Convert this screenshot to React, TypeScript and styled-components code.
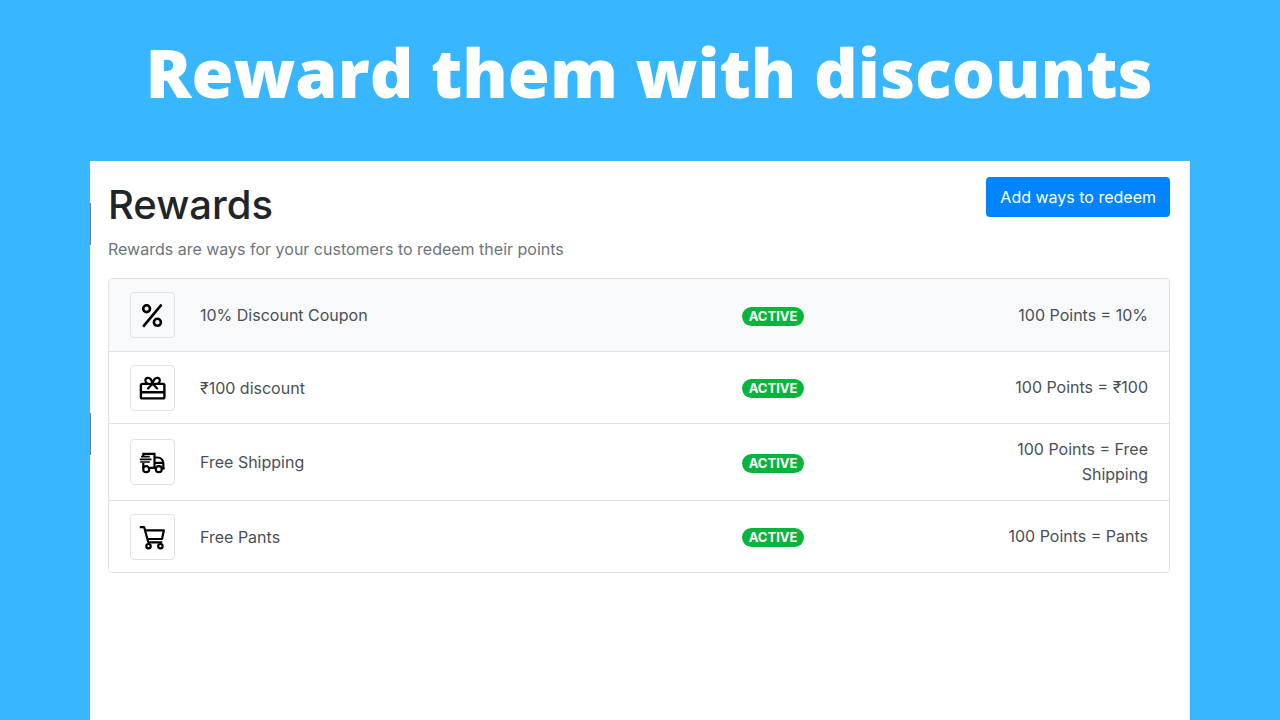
import React from "react";
import styled, { createGlobalStyle } from "styled-components";

const GlobalStyle = createGlobalStyle`
  * { box-sizing: border-box; }
  body {
    margin: 0;
    background: #38b6ff;
    font-family: Inter, "Liberation Sans", sans-serif;
    font-size: 16px;
    color: #495057;
  }
`;

const Page = styled.div`
  display: flex;
  flex-direction: column;
  min-height: 100vh;
`;

const Banner = styled.h1`
  margin: 0;
  padding: 24px 20px 41px 38px;
  text-align: center;
  color: #fff;
  font: 800 68px/96px "Open Sans", sans-serif;
`;

const Panel = styled.main`
  position: relative;
  flex: 1;
  margin: 0 90px;
  padding: 16px 19px 20px 18px;
  background: #fff;
  border-right: 1px solid #e9ecef;
`;

const EdgeMark = styled.span<{ $top: number }>`
  position: absolute;
  left: 0;
  top: ${(p) => p.$top}px;
  width: 1px;
  height: 42px;
  background: #66808f;
`;

const Header = styled.header`
  display: flex;
  justify-content: space-between;
  align-items: flex-start;
`;

const Title = styled.h2`
  margin: 0;
  font-size: 40px;
  line-height: 55px;
  font-weight: 500;
  color: #212529;
`;

const Subtitle = styled.p`
  margin: 4px 0 16px;
  line-height: 26px;
  color: #6c757d;
`;

const AddButton = styled.button`
  height: 40px;
  padding: 0 14px;
  border: 0;
  border-radius: 4px;
  background: #0084ff;
  color: #fff;
  font: inherit;
`;

const List = styled.ul`
  margin: 0;
  padding: 0;
  list-style: none;
  border: 1px solid #dfe2e5;
  border-radius: 4px;
  overflow: hidden;
`;

const Row = styled.li<{ $highlighted: boolean }>`
  display: grid;
  grid-template-columns: 70px 20fr 9fr 6fr;
  align-items: center;
  min-height: 72px;
  padding: 12px 21px;
  background: ${(p) => (p.$highlighted ? "#f8f9fb" : "#fff")};
  & + & { border-top: 1px solid #dfe2e5; }
`;

const IconBox = styled.span`
  display: flex;
  align-items: center;
  justify-content: center;
  width: 45px;
  height: 46px;
  border: 1px solid #dee2e6;
  border-radius: 4px;
  color: #000;
`;

const Badge = styled.span`
  justify-self: start;
  padding: 0 7px;
  margin-top: 2px;
  border-radius: 10px;
  background: #06b53c;
  color: #fff;
  font-size: 13px;
  line-height: 19px;
  font-weight: 700;
`;

const Points = styled.span`
  padding: 1px 0;
  text-align: right;
  line-height: 25px;
`;

const Glyph = styled.svg`
  width: 28px;
  height: 28px;
  fill: none;
  stroke: currentColor;
  stroke-width: 2.2;
`;

const PercentIcon = () => (
  <Glyph viewBox="0 0 28 28" aria-hidden="true">
    <g strokeWidth="2.600">
      <circle cx="7.600" cy="7.700" r="3.400" />
      <circle cx="18.400" cy="21.300" r="3.500" />
      <path d="M4.800 24.800 21.900 4.400" strokeLinecap="round" />
    </g>
  </Glyph>
);

const GiftIcon = () => (
  <Glyph viewBox="0 0 28 28" aria-hidden="true">
    <rect x="1.900" y="9.900" width="23.500" height="14.500" rx="1.500" strokeWidth="2.400" />
    <path d="M1.900 18.300h23.500" strokeWidth="2.400" />
    <path d="M13.600 9.400C12.600 5.500 10.500 3.400 8.300 3.900c-2.500.6-2.600 4.200 0 5.500M13.600 9.400C14.600 5.500 16.700 3.400 18.900 3.900c2.500.6 2.600 4.200 0 5.500" />
    <path d="m9 14.400 4.600-4.700 4.600 4.700" strokeLinecap="round" />
  </Glyph>
);

const TruckIcon = () => (
  <Glyph viewBox="0 0 28 28" aria-hidden="true">
    <path d="M4.300 8.200V5.800H15.500v14H11M15.500 9.500h2.800c3.600 0 6 2.600 6 6v4.300h-1M15.500 14.800h8.500M4.300 15v5M23.500 20.300h2.300" />
    <path d="M2 8.600h8.800M.8 11.300h11.700M1.200 14h9.600" strokeWidth="1.700" />
    <circle cx="7.200" cy="21.200" r="3" />
    <circle cx="19.800" cy="21.200" r="3" />
  </Glyph>
);

const CartIcon = () => (
  <Glyph viewBox="0 0 28 28" aria-hidden="true">
    <path d="M.8 4.200h4.400L9.300 19.300h14M6.200 7.300h18.700L23 16H8.500" strokeLinejoin="round" />
    <circle cx="9.500" cy="23.200" r="2.200" />
    <circle cx="21.400" cy="23.200" r="2.200" />
  </Glyph>
);

const rewards = [
  { name: "10% Discount Coupon", points: "100 Points = 10%", Icon: PercentIcon },
  { name: "₹100 discount", points: "100 Points = ₹100", Icon: GiftIcon },
  { name: "Free Shipping", points: "100 Points = Free Shipping", Icon: TruckIcon },
  { name: "Free Pants", points: "100 Points = Pants", Icon: CartIcon },
];

export default function App() {
  return (
    <Page>
      <GlobalStyle />
      <Banner>Reward them with discounts</Banner>
      <Panel>
        <EdgeMark $top={42} />
        <EdgeMark $top={252} />
        <Header>
          <Title>Rewards</Title>
          <AddButton type="button">Add ways to redeem</AddButton>
        </Header>
        <Subtitle>Rewards are ways for your customers to redeem their points</Subtitle>
        <List>
          {rewards.map(({ name, points, Icon }, i) => (
            <Row key={name} $highlighted={i === 0}>
              <IconBox><Icon /></IconBox>
              <span>{name}</span>
              <Badge>ACTIVE</Badge>
              <Points>{points}</Points>
            </Row>
          ))}
        </List>
      </Panel>
    </Page>
  );
}
